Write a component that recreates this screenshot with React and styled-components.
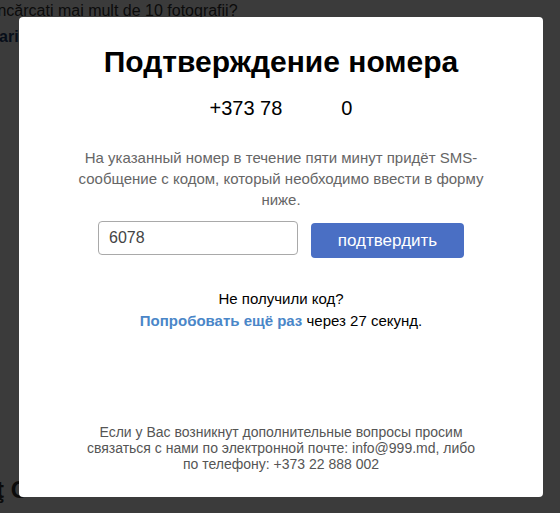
import React, { useState } from "react";
import styled, { createGlobalStyle } from "styled-components";

const GlobalStyle = createGlobalStyle`
  html, body {
    margin: 0;
    padding: 0;
    background: #ffffff;
    font-family: Arial, "Liberation Sans", sans-serif;
  }
`;

const Page = styled.div`
  position: relative;
  width: 560px;
  height: 513px;
  overflow: hidden;
  background: #ffffff;
`;

const BackText = styled.div`
  margin-left: -7px;
  padding-top: 1px;
  font-size: 16px;
  line-height: 19px;
  color: #333;
  white-space: nowrap;
`;

const BackLink = styled.div`
  margin-left: -1px;
  margin-top: 7px;
  font-size: 16px;
  line-height: 19px;
  font-weight: bold;
  color: #1c3d6e;
`;

const BackHeading = styled.div`
  position: absolute;
  left: -4px;
  top: 476px;
  font-size: 24px;
  font-weight: bold;
  color: #333;
  white-space: nowrap;
`;

const Overlay = styled.div`
  position: absolute;
  inset: 0;
  background: rgba(0, 0, 0, 0.77);
`;

const Modal = styled.div`
  position: absolute;
  left: 19px;
  top: 17px;
  width: 524px;
  height: 480px;
  box-sizing: border-box;
  background: #fff;
  border-radius: 4px;
  padding: 27px 30px 0;
  display: flex;
  flex-direction: column;
  align-items: center;
  text-align: center;
`;

const Title = styled.h2`
  margin: 0;
  font-size: 30px;
  line-height: 36px;
  font-weight: bold;
  color: #000;
`;

const Phone = styled.div`
  margin-top: 16px;
  display: flex;
  gap: 59px;
  font-size: 20px;
  line-height: 24px;
  color: #000;
`;

const Hint = styled.p`
  margin: 27px 0 0;
  width: 410px;
  font-size: 15px;
  line-height: 21px;
  color: #666;
`;

const Form = styled.form`
  margin-top: 11px;
  display: flex;
  align-items: flex-start;
  gap: 13px;
`;

const CodeInput = styled.input`
  width: 200px;
  height: 34px;
  box-sizing: border-box;
  border: 1px solid #a9a9a9;
  border-radius: 4px;
  padding: 0 10px;
  font-family: Arial, "Liberation Sans", sans-serif;
  font-size: 16px;
  color: #444;
  outline: none;
`;

const SubmitButton = styled.button`
  margin-top: 2px;
  width: 153px;
  height: 35px;
  border: none;
  border-radius: 4px;
  background: #4a6fc4;
  color: #fff;
  font-family: Arial, "Liberation Sans", sans-serif;
  font-size: 17px;
  cursor: pointer;
`;

const Resend = styled.div`
  margin-top: 30px;
  font-size: 15px;
  line-height: 22px;
  color: #000;
`;

const ResendLink = styled.a`
  font-weight: bold;
  color: #4a86c8;
  text-decoration: none;
  cursor: pointer;
`;

const Footer = styled.p`
  margin: auto 0 25px;
  width: 392px;
  font-size: 14px;
  line-height: 16px;
  color: #555;
`;

const App = () => {
  const [code, setCode] = useState("6078");
  const seconds = 27;

  return (
    <Page>
      <GlobalStyle />
      <BackText>încărcati mai mult de 10 fotografii?</BackText>
      <BackLink>ari</BackLink>
      <BackHeading>ţ C</BackHeading>
      <Overlay />
      <Modal>
        <Title>Подтверждение номера</Title>
        <Phone>
          <span>+373 78</span>
          <span>0</span>
        </Phone>
        <Hint>
          На указанный номер в течение пяти минут придёт SMS-сообщение с
          кодом, который необходимо ввести в форму ниже.
        </Hint>
        <Form onSubmit={(e) => e.preventDefault()}>
          <CodeInput value={code} onChange={(e) => setCode(e.target.value)} />
          <SubmitButton type="submit">подтвердить</SubmitButton>
        </Form>
        <Resend>
          Не получили код?
          <br />
          <ResendLink>Попробовать ещё раз</ResendLink> через {seconds} секунд.
        </Resend>
        <Footer>
          Если у Вас возникнут дополнительные вопросы просим связаться с нами
          по электронной почте: info@999.md, либо по телефону: +373 22 888 002
        </Footer>
      </Modal>
    </Page>
  );
};

export default App;
